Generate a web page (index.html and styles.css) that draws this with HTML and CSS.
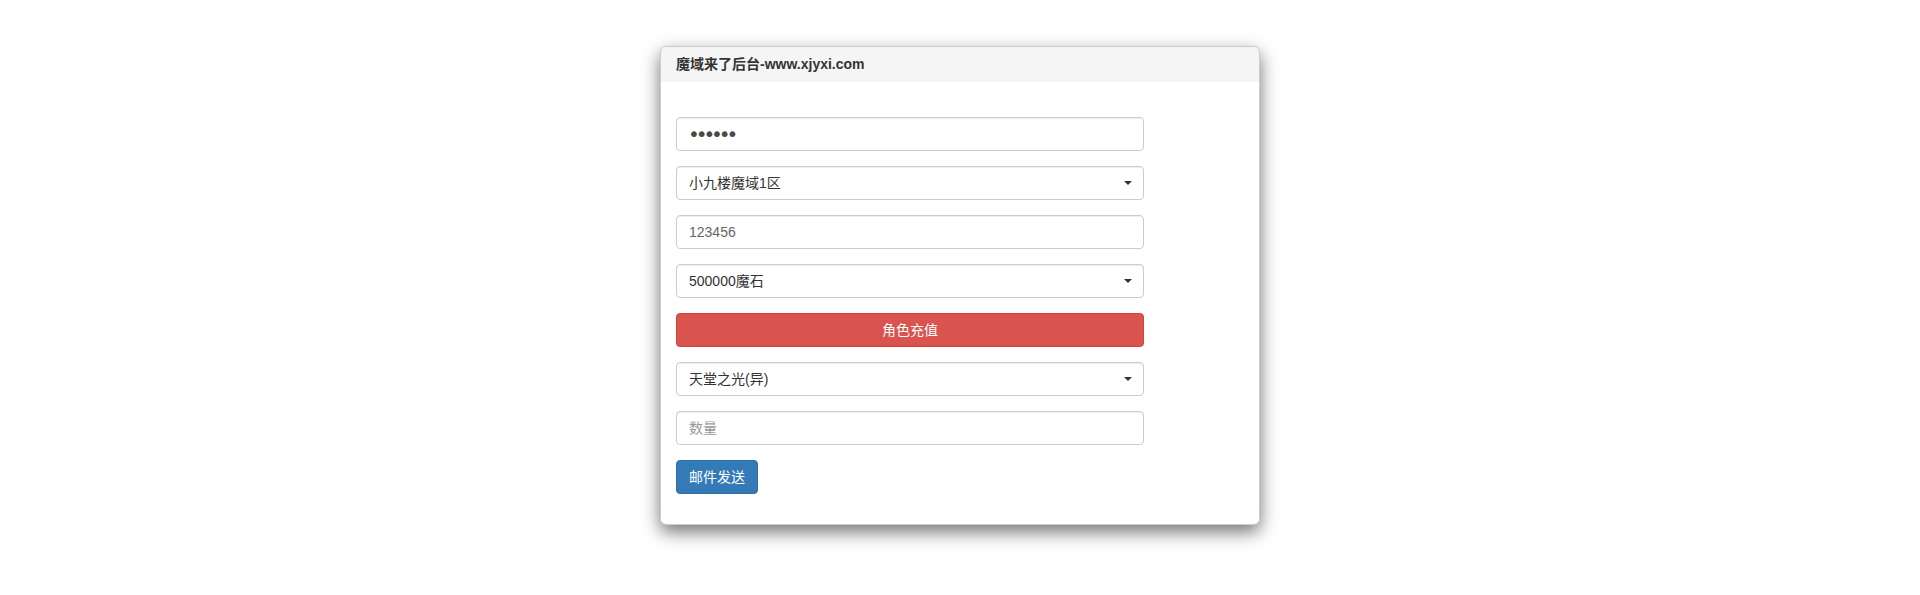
FILE: index.html
```html
<!DOCTYPE html>
<html lang="zh-CN">
<head>
  <meta charset="UTF-8">
  <meta name="viewport" content="width=device-width, initial-scale=1.0">
  <title>魔域来了后台-www.xjyxi.com</title>
  <link rel="stylesheet" href="styles.css">
</head>
<body>
  <div class="panel">
    <div class="panel-heading">魔域来了后台-www.xjyxi.com</div>
    <div class="panel-body">
      <form class="gm-form">
        <div class="form-group">
          <input type="password" class="form-control pwd" name="pwd" value="123456">
        </div>
        <div class="form-group select-wrap">
          <select class="form-control" name="server">
            <option>小九楼魔域1区</option>
          </select>
        </div>
        <div class="form-group">
          <input type="text" class="form-control light" name="role" value="123456">
        </div>
        <div class="form-group select-wrap">
          <select class="form-control" name="amount">
            <option>500000魔石</option>
          </select>
        </div>
        <div class="form-group">
          <button type="button" class="btn btn-danger btn-block">角色充值</button>
        </div>
        <div class="form-group select-wrap">
          <select class="form-control" name="item">
            <option>天堂之光(异)</option>
          </select>
        </div>
        <div class="form-group">
          <input type="text" class="form-control" name="num" placeholder="数量">
        </div>
        <div class="form-group">
          <button type="button" class="btn btn-primary">邮件发送</button>
        </div>
      </form>
    </div>
  </div>
</body>
</html>
```

FILE: styles.css
```css
/* General Styling */
html {
  background: #fff;
}

body {
  font-family: "Liberation Sans", Arial, "Noto Sans CJK SC", sans-serif;
  font-size: 14px;
  color: #333;
  background: #fff;
  margin: 0;
  padding: 46px 0 70px;
  min-height: 100vh;
  box-sizing: border-box;
}

.panel {
  width: 600px;
  box-sizing: border-box;
  margin: 0 auto;
  background: #fff;
  border: 1px solid rgba(0, 0, 0, 0.2);
  border-radius: 6px;
  box-shadow: 0 7px 18px rgba(0, 0, 0, 0.55);
  overflow: hidden;
}

.panel-heading {
  padding: 10px 15px;
  line-height: 15px;
  background: #f5f5f5;
  font-weight: bold;
  color: #333;
}

.panel-body {
  padding: 35px 15px 15px;
}

.gm-form {
  width: 468px;
}

.form-group {
  margin-bottom: 15px;
}

.form-control {
  display: block;
  width: 100%;
  height: 34px;
  box-sizing: border-box;
  padding: 6px 12px;
  font-family: inherit;
  font-size: 14px;
  line-height: 20px;
  color: #555;
  background: #fff;
  border: 1px solid #ccc;
  border-radius: 4px;
  box-shadow: inset 0 1px 1px rgba(0, 0, 0, 0.075);
  outline: none;
}

.form-control::placeholder {
  color: #999;
}

.form-control.light {
  color: #666;
}

.form-control.pwd {
  font-family: "DejaVu Sans", sans-serif;
  font-size: 20px;
  letter-spacing: -4.1px;
  padding-left: 11px;
  color: #4a4a44;
}

select.form-control {
  appearance: none;
  -webkit-appearance: none;
  color: #333;
  padding-right: 30px;
}

.select-wrap {
  position: relative;
}

.select-wrap::after {
  content: "";
  position: absolute;
  right: 12px;
  top: 15px;
  border-left: 4px solid transparent;
  border-right: 4px solid transparent;
  border-top: 4px solid #333;
  pointer-events: none;
}

.btn {
  display: inline-block;
  height: 34px;
  box-sizing: border-box;
  padding: 6px 12px;
  font-family: inherit;
  font-size: 14px;
  line-height: 20px;
  color: #fff;
  border: 1px solid transparent;
  border-radius: 4px;
  cursor: pointer;
}

.btn-block {
  display: block;
  width: 100%;
}

.btn-danger {
  background: #d9534f;
  border-color: #d43f3a;
}

.btn-primary {
  background: #337ab7;
  border-color: #2e6da4;
}
```
